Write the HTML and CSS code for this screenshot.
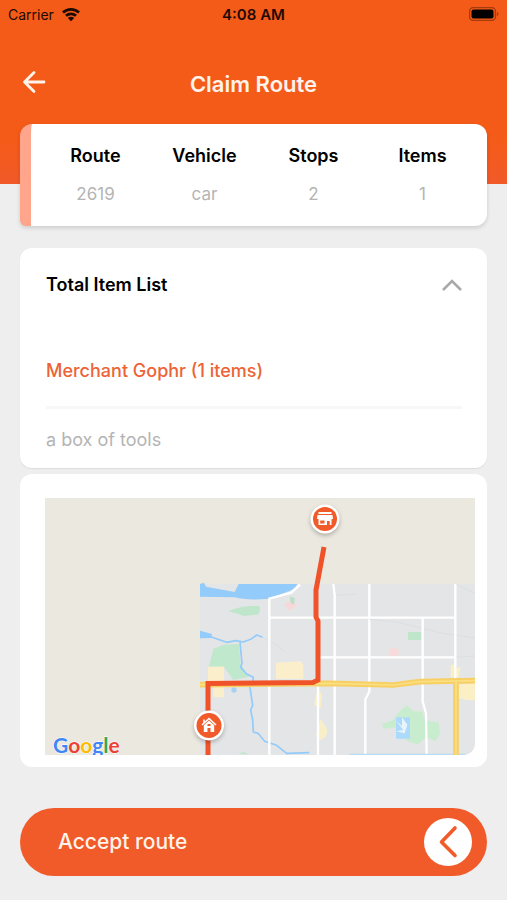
FILE: index.html
```html
<!DOCTYPE html>
<html lang="en">
<head>
<meta charset="utf-8">
<meta name="viewport" content="width=device-width, initial-scale=1">
<title>Claim Route</title>
<link rel="stylesheet" href="styles.css">
</head>
<body>
<header class="header">
  <div class="status">
    <div class="carrier">Carrier
      <svg class="wifi" viewBox="0 0 20 15" aria-hidden="true">
        <path d="M2 5.6a11.6 11.6 0 0 1 16 0M5 8.8a7.2 7.2 0 0 1 10 0" fill="none" stroke="currentColor" stroke-width="2.7"/>
        <path d="M6.8 11a4.6 4.6 0 0 1 6.4 0L10 14.2z" fill="currentColor"/>
      </svg>
    </div>
    <time class="clock">4:08 AM</time>
    <svg class="battery" viewBox="0 0 30 14" aria-hidden="true">
      <rect x="0.5" y="0.5" width="26" height="13" rx="4" fill="none" stroke="#a53b0d" stroke-width="1.4"/>
      <rect x="2.5" y="2.5" width="22" height="9" rx="2" fill="#000"/>
      <path d="M28 5v4q1.5-.5 1.500-2t-1.500-2z" fill="#a53b0d"/>
    </svg>
  </div>
  <div class="titlebar">
    <button class="back" type="button" aria-label="Back">
      <svg viewBox="0 0 24 24" aria-hidden="true"><path d="M22 12H3M12 2.500 2.500 12 12 21.500" fill="none" stroke="currentColor" stroke-width="2.800" stroke-linecap="round" stroke-linejoin="round"/></svg>
    </button>
    <h1>Claim Route</h1>
  </div>
</header>
<main class="main">
  <dl class="summary">
    <div><dt>Route</dt><dd>2619</dd></div>
    <div><dt>Vehicle</dt><dd>car</dd></div>
    <div><dt>Stops</dt><dd>2</dd></div>
    <div><dt>Items</dt><dd>1</dd></div>
  </dl>
  <section class="card items">
    <button class="toggle" type="button" aria-expanded="true">
      <span>Total Item List</span>
      <svg viewBox="0 0 20 12" aria-hidden="true"><path d="M1 11 10 2l9 9" fill="none" stroke="currentColor" stroke-width="2.600"/></svg>
    </button>
    <h2>Merchant Gophr (1 items)</h2>
    <p>a box of tools</p>
  </section>
  <section class="card map-card">
    <div class="map">
      <svg viewBox="0 0 430 257" role="img" aria-label="Route map">
        <rect width="430" height="257" fill="#ebe8df"/>
        <rect x="155" y="86" width="275" height="171" fill="#e4e5e6"/>
        <g transform="translate(145 72) scale(.33333)">
          <path d="M30 42 42 38 48 50 134 66 146 42H322Q315 58 290 66L238 86Q170 92 135 82L30 80z" fill="#93cbfa"/>
          <path d="M114 124Q160 104 208 109 214 120 204 134L160 138Q135 128 114 124z" fill="#bfe6cb"/>
          <path d="M70 236 102 224 146 222 152 282 176 320 130 330 102 290H56L64 262z" fill="#c0e8cc"/>
          <path d="M54 290H102V382H70V345H54zM258 278 334 274 340 288V326H258z" fill="#fbefcb"/>
          <path d="M384 350 396 378 392 416 372 404zM392 446 412 480 408 500 390 510 378 496z" fill="#f8efc9"/>
          <path d="M282 104 300 92 322 106 300 122z" fill="#f7d8d8"/>
          <path d="M300 80 314 84 312 104 302 98z" fill="#b9dfc4"/>
          <path d="M30 182 66 192 64 204 30 205z" fill="#93cbfa"/>
          <path d="M62 200 110 217 138 212 160 216 182 208 200 195 218 202M150 216 154 260 156 280 152 292 170 312 190 322 188 340 180 352 184 380 188 406 182 420 188 450 190 486 204 490 224 514 260 526 290 550 358 548" fill="none" stroke="#93cbfa" stroke-width="5" stroke-linejoin="round"/>
          <path d="M218 202 260 225 284 244" fill="none" stroke="#d5e1e8" stroke-width="3"/>
          <circle cx="132" cy="360" r="8" fill="#a5d2f3"/>
          <path d="M145 550 164 546 174 554z" fill="#bfe6cb"/>
          <path d="M238 555V86L304 68 330 44M238 143H795M386 262H795M430 42 434 75V555M384 340V555M538 42V365L526 388V555" fill="none" stroke="#fff" stroke-width="7"/>
        </g>
        <g transform="translate(285 72) scale(.33333)">
          <path d="M18 76 76 72M118 148 210 158 330 188 435 204M376 42 435 70M376 262 435 258" fill="none" stroke="#dadfe1" stroke-width="3"/>
          <path d="M234 186H274V210H234z" fill="#bfe6cb"/>
          <path d="M182 234H202L208 256 176 258z" fill="#f9dada"/>
          <path d="M156 462 190 450 208 424 230 406 250 424 276 424 284 450 326 458 330 490 318 514 290 502 262 524 226 510 198 472 160 476z" fill="#c8edce"/>
          <path d="M198 442H240V506H198z" fill="#acdafd"/>
          <path d="M198 452 216 468 216 442 232 464 224 490 198 484 220 480z" fill="#e8f4f8"/>
          <path d="M362 284H372L378 294 392 292 386 322H362zM382 344 438 338V390H412L388 384z" fill="#fbf0c5"/>
          <path d="M278 143V395L288 430 290 555M376 42V330" fill="none" stroke="#fff" stroke-width="7"/>
          <path d="M58 553H405" stroke="#b9dcf2" stroke-width="4"/>
          <path d="M-390 344 0 340 190 345 270 335 435 332M378 336V555" fill="none" stroke="#f7cf62" stroke-width="17"/>
          <path d="M-390 344 0 340 190 345 270 335 435 332M378 336V555" fill="none" stroke="#fbdf83" stroke-width="5"/>
        </g>
        <path d="M279 49 271 92V119L273 123V182L268 184.500 163 185.500V257" fill="none" stroke="#f0532a" stroke-width="5"/>
        <g class="pin">
          <circle cx="280" cy="21" r="14.500" fill="#fff"/>
          <circle cx="280" cy="21" r="12" fill="#f15a29"/>
          <path d="M273.500 14H286.500V16H273.500zM272.500 17H287.500L288 21H272zM273.500 21H286.500V27H284.700V23H282V27H273.500zM275.200 22.500V25.500H279.500V22.500z" fill="#fff" fill-rule="evenodd"/>
        </g>
        <g class="pin">
          <circle cx="164" cy="227.500" r="15" fill="#fff"/>
          <circle cx="164" cy="227.500" r="12.500" fill="#f15a29"/>
          <path d="M157 227 164 220.500 171 227M159 225V221.500" fill="none" stroke="#fff" stroke-width="1.600"/>
          <path d="M158.800 227.300 164 222.500 169.200 227.300V234H165.500V230H162.500V234H158.800zM162.500 226V228H165.500V226z" fill="#fff" fill-rule="evenodd"/>
        </g>
      </svg>
      <div class="google"><span class="blue">G</span><span class="red">o</span><span class="yellow">o</span><span class="blue">g</span><span class="green">l</span><span class="red">e</span></div>
    </div>
  </section>
  <button class="accept" type="button">
    <span>Accept route</span>
    <svg viewBox="0 0 48 48" aria-hidden="true"><circle cx="24" cy="24" r="24" fill="#fff"/><path d="M31 10 17.500 24 31 37.500" fill="none" stroke="#f15a29" stroke-width="3.600" stroke-linecap="round" stroke-linejoin="round"/></svg>
  </button>
</main>
</body>
</html>
```
FILE: styles.css
```css
* { box-sizing: border-box; }

body {
  margin: 0;
  background: #eeeeee;
  color: #000;
  font-family: Inter, "Liberation Sans", sans-serif;
}

button {
  border: 0;
  padding: 0;
  background: none;
  font: inherit;
  color: inherit;
  cursor: pointer;
}

h1, h2, p, dl, dd { margin: 0; }
svg { display: block; }

.header {
  padding-bottom: 80px;
  background: linear-gradient(#f55b18 75%, #f15a29);
}

.status {
  display: grid;
  grid-template-columns: 1fr auto 1fr;
  align-items: center;
  height: 28px;
  padding: 0 8px;
  color: #1d0a02;
  font-size: 14px;
}

.carrier { display: flex; align-items: center; gap: 7px; }
.wifi { width: 20px; height: 15px; }
.clock { font-size: 15px; font-weight: 600; }
.battery { justify-self: end; width: 30px; height: 14px; }

.titlebar {
  display: grid;
  grid-template-columns: 24px 1fr 24px;
  align-items: center;
  height: 76px;
  padding: 32px 22px 0;
  color: #fff3eb;
}

.back svg { width: 24px; height: 24px; }
.titlebar h1 { font-size: 22px; font-weight: 600; line-height: 28px; text-align: center; margin-top: 4px; }

.main { padding: 0 20px 24px; }

.summary {
  display: grid;
  grid-template-columns: repeat(4, 1fr);
  margin-top: -60px;
  padding: 20px 10px;
  border-left: 11px solid #ffa58c;
  border-radius: 12px 12px 12px 6px;
  background: #fff;
  box-shadow: 0 2px 4px rgba(0, 0, 0, 0.14);
  text-align: center;
  font-size: 17px;
  line-height: 24px;
}

.summary dt { font-size: 18px; font-weight: 600; }
.summary dd { margin-top: 14px; color: #b4b4b4; }

.card {
  border-radius: 12px;
  background: #fff;
}

.items {
  margin-top: 22px;
  padding: 24px 25px 15px 26px;
  box-shadow: 0 1px 1px rgba(0, 0, 0, 0.08);
}

.toggle {
  display: flex;
  align-items: center;
  justify-content: space-between;
  width: 100%;
  font-size: 18px;
  font-weight: 600;
  line-height: 26px;
}

.toggle svg { width: 20px; height: 12px; color: #a9a9a9; }

.items h2 {
  margin-top: 60px;
  padding-bottom: 22px;
  border-bottom: 3px solid #f7f7f7;
  color: #ec6337;
  font-size: 18px;
  font-weight: 500;
  line-height: 26px;
}

.items p {
  margin-top: 18px;
  color: #b4b4b4;
  font-size: 18px;
  line-height: 26px;
}

.map-card { margin-top: 6px; padding: 24px 12px 12px 25px; }

.map {
  position: relative;
  overflow: hidden;
  border-radius: 0 0 12px 0;
}

.map svg { width: 100%; height: auto; }
.pin { filter: drop-shadow(0 2px 2px rgba(0, 0, 0, 0.25)); }

.google {
  position: absolute;
  left: 8px;
  bottom: 0;
  font-family: Lato, sans-serif;
  font-size: 21px;
  font-weight: 700;
  line-height: 20px;
  -webkit-text-stroke: 1px #fff;
  paint-order: stroke fill;
}

.blue { color: #4285f4; }
.red { color: #ea4335; }
.yellow { color: #fbbc05; }
.green { color: #34a853; }

.accept {
  display: flex;
  align-items: center;
  justify-content: space-between;
  width: 100%;
  margin-top: 41px;
  padding: 10px 15px 10px 38px;
  border-radius: 34px;
  background: #f15a29;
  color: #fff3eb;
  font-size: 21px;
  font-weight: 500;
  line-height: 28px;
}

.accept svg { width: 48px; height: 48px; }
```
